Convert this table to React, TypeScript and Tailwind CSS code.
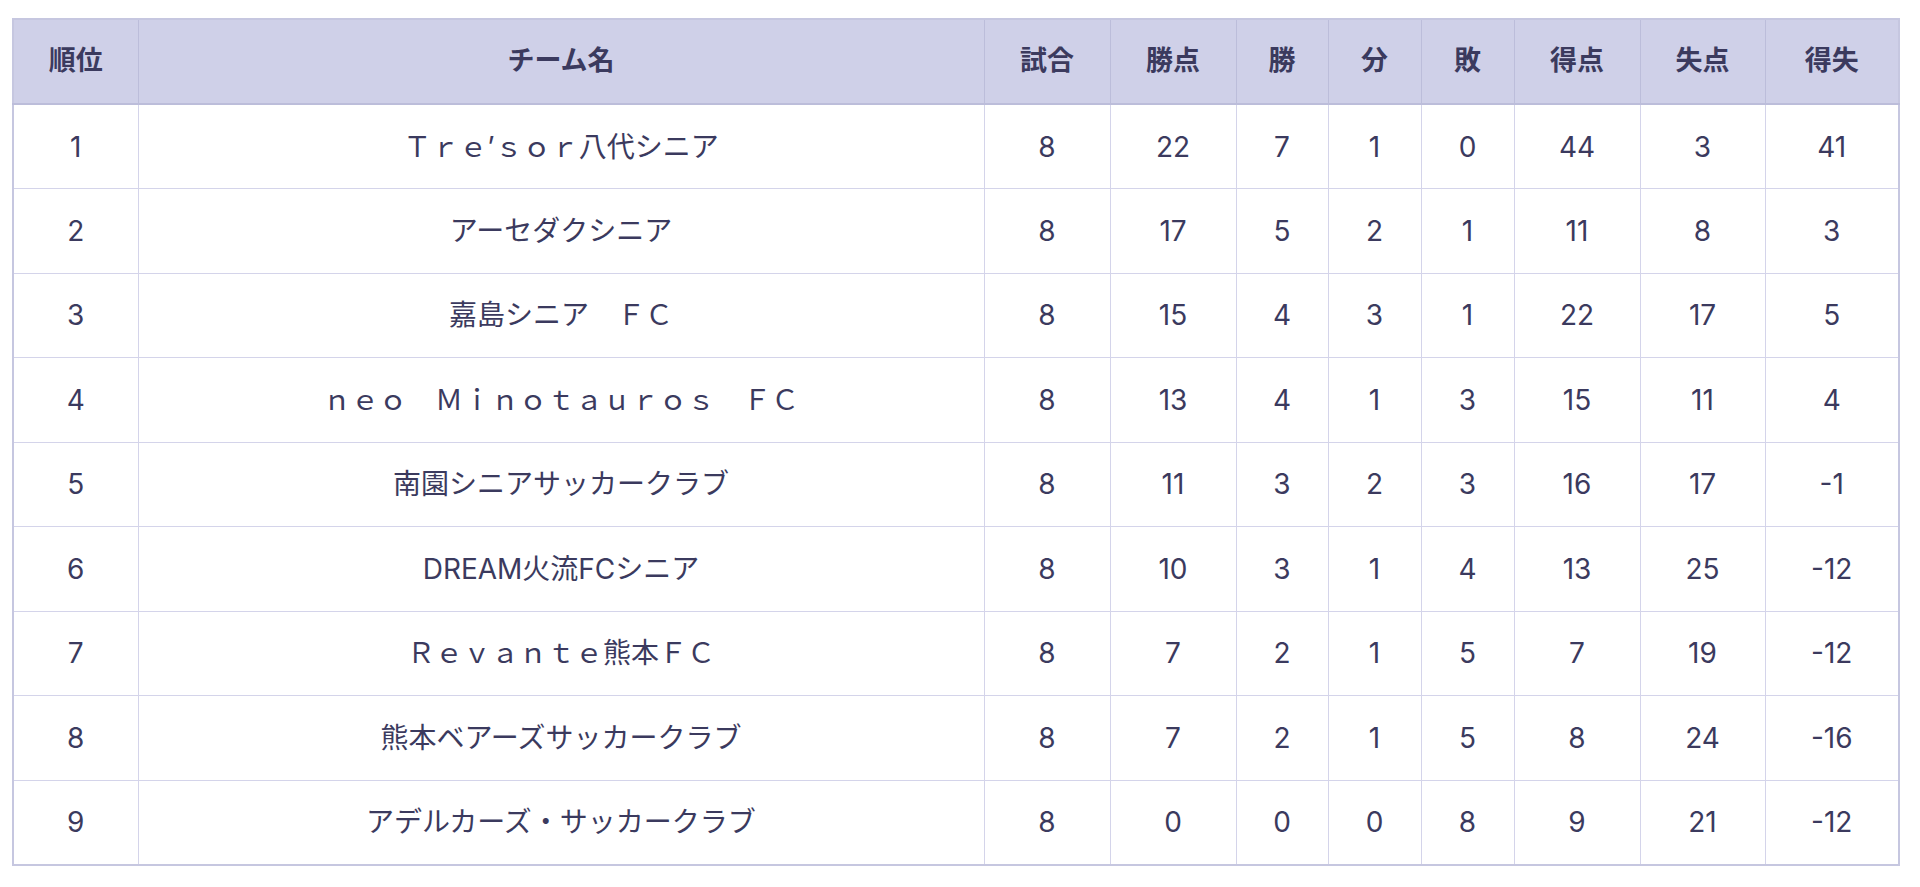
type Row = {
  rank: number
  team: string
  played: number
  points: number
  win: number
  draw: number
  lose: number
  gf: number
  ga: number
  diff: number
}

/* ---------------- DATA ---------------- */

const ROWS: Row[] = [
  { rank: 1, team: "Ｔｒｅ’ｓｏｒ八代シニア", played: 8, points: 22, win: 7, draw: 1, lose: 0, gf: 44, ga: 3, diff: 41 },
  { rank: 2, team: "アーセダクシニア", played: 8, points: 17, win: 5, draw: 2, lose: 1, gf: 11, ga: 8, diff: 3 },
  { rank: 3, team: "嘉島シニア　ＦＣ", played: 8, points: 15, win: 4, draw: 3, lose: 1, gf: 22, ga: 17, diff: 5 },
  { rank: 4, team: "ｎｅｏ　Ｍｉｎｏｔａｕｒｏｓ　ＦＣ", played: 8, points: 13, win: 4, draw: 1, lose: 3, gf: 15, ga: 11, diff: 4 },
  { rank: 5, team: "南園シニアサッカークラブ", played: 8, points: 11, win: 3, draw: 2, lose: 3, gf: 16, ga: 17, diff: -1 },
  { rank: 6, team: "DREAM火流FCシニア", played: 8, points: 10, win: 3, draw: 1, lose: 4, gf: 13, ga: 25, diff: -12 },
  { rank: 7, team: "Ｒｅｖａｎｔｅ熊本ＦＣ", played: 8, points: 7, win: 2, draw: 1, lose: 5, gf: 7, ga: 19, diff: -12 },
  { rank: 8, team: "熊本ベアーズサッカークラブ", played: 8, points: 7, win: 2, draw: 1, lose: 5, gf: 8, ga: 24, diff: -16 },
  { rank: 9, team: "アデルカーズ・サッカークラブ", played: 8, points: 0, win: 0, draw: 0, lose: 8, gf: 9, ga: 21, diff: -12 },
]

const HEADERS = [
  { label: "順位", w: "w-[125px]" },
  { label: "チーム名", w: "w-[846px]" },
  { label: "試合", w: "w-[126px]" },
  { label: "勝点", w: "w-[126px]" },
  { label: "勝", w: "w-[92px]" },
  { label: "分", w: "w-[93px]" },
  { label: "敗", w: "w-[93px]" },
  { label: "得点", w: "w-[126px]" },
  { label: "失点", w: "w-[125px]" },
  { label: "得失", w: "w-[134px]" },
]

const td = "border border-[#d4d4ea] text-center align-middle"

/* ---------------- PAGE ---------------- */

export default function App() {
  return (
    <div className="min-h-screen bg-white pt-[18px] pl-[12px] font-['Inter','Noto_Sans_CJK_JP',sans-serif] text-[#3b3a5e]">
      <table className="w-[1886px] table-fixed border-collapse border-2 border-[#c6c7e0] text-[28px]">
        <colgroup>
          {HEADERS.map((h) => (
            <col key={h.label} className={h.w} />
          ))}
        </colgroup>
        <thead>
          <tr className="h-[85px] bg-[#cfd0e8]">
            {HEADERS.map((h) => (
              <th
                key={h.label}
                className="border border-[#bcbdda] border-b-2 text-center align-middle font-bold text-[27px]"
              >
                {h.label}
              </th>
            ))}
          </tr>
        </thead>
        <tbody>
          {ROWS.map((r) => (
            <tr key={r.rank} className="h-[84.5px]">
              <td className={td}>{r.rank}</td>
              <td className={td}>{r.team}</td>
              <td className={td}>{r.played}</td>
              <td className={td}>{r.points}</td>
              <td className={td}>{r.win}</td>
              <td className={td}>{r.draw}</td>
              <td className={td}>{r.lose}</td>
              <td className={td}>{r.gf}</td>
              <td className={td}>{r.ga}</td>
              <td className={td}>{r.diff}</td>
            </tr>
          ))}
        </tbody>
      </table>
    </div>
  )
}
